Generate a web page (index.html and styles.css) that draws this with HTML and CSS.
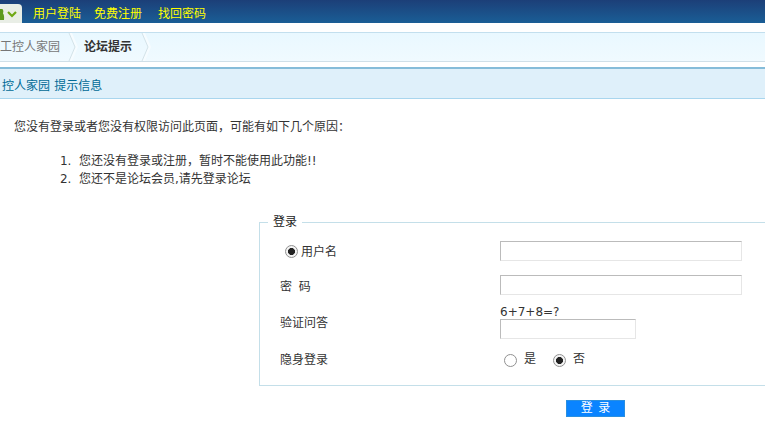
FILE: index.html
```html
<!DOCTYPE html>
<html lang="zh">
<head>
<meta charset="utf-8">
<title>论坛提示</title>
<link rel="stylesheet" href="styles.css">
</head>
<body>
<header class="topbar">
  <div class="tab">
    <svg width="22" height="19" viewBox="0 0 22 19"><path d="M0 5h2.500q1.500 1.500 .5 4.500 1.500 1.500 1 6.500H0z" fill="#5c9a1e"/><path d="M8 8l4 4 4-4" fill="none" stroke="#6fa814" stroke-width="2.200"/></svg>
  </div>
  <nav class="toplinks">
    <a>用户登陆</a>
    <a>免费注册</a>
    <a>找回密码</a>
  </nav>
</header>
<div class="crumbs">
  <span class="crumb">工控人家园</span>
  <svg class="sep" width="10" height="28" viewBox="0 0 10 28"><path d="M1 0l6 14-6 14h3l6-14-6-14z" fill="#f6fcff"/><path d="M1 0l6 14-6 14" fill="none" stroke="#d3e2e8"/></svg>
  <strong class="crumb-cur">论坛提示</strong>
  <svg class="sep" width="10" height="28" viewBox="0 0 10 28"><path d="M1 0l6 14-6 14h3l6-14-6-14z" fill="#f6fcff"/><path d="M1 0l6 14-6 14" fill="none" stroke="#d3e2e8"/></svg>
</div>
<div class="titlebar"><a>控人家园</a> <a>提示信息</a></div>
<p class="reason">您没有登录或者您没有权限访问此页面，可能有如下几个原因：</p>
<ol class="list">
  <li>您还没有登录或注册，暂时不能使用此功能!!</li>
  <li>您还不是论坛会员,请先登录论坛</li>
</ol>
<form class="login">
  <fieldset class="box">
    <legend class="legend">登录</legend>
    <div class="row row-user">
      <label class="label label-user"><input class="radio" type="radio" name="t" checked><span>用户名</span></label>
      <input class="field" type="text">
    </div>
    <div class="row row-pass">
      <label class="label">密&nbsp;&nbsp;码</label>
      <input class="field" type="password">
    </div>
    <div class="row row-code">
      <label class="label">验证问答</label>
      <div class="code">
        <div class="question">6+7+8=?</div>
        <input class="field field-short" type="text">
      </div>
    </div>
    <div class="row row-hide">
      <label class="label">隐身登录</label>
      <div class="choices">
        <label class="choice"><input class="radio" type="radio" name="h"><span>是</span></label>
        <label class="choice"><input class="radio" type="radio" name="h" checked><span>否</span></label>
      </div>
    </div>
  </fieldset>
  <button class="submit" type="button">登 录</button>
</form>
</body>
</html>
```
FILE: styles.css
```css
* { box-sizing: border-box; }
html, body { margin: 0; padding: 0; height: 427px; overflow: hidden; background: #fff; }
body { font: 12px/18px "Liberation Sans", "Noto Sans CJK SC", sans-serif; color: #333; }
.topbar { height: 23px; display: flex; align-items: flex-end; background: linear-gradient(#1c3f78, #1a5e96); }
.tab { width: 22px; height: 19px; background: #e9eee6; border-top-right-radius: 4px; display: flex; }
.toplinks { display: flex; gap: 14px; margin-left: 11px; height: 23px; align-items: center; padding-top: 5px; color: #ff0; }
.toplinks a { width: 48px; }
.toplinks a:first-child { margin-right: -1px; }
.toplinks a:last-child { margin-left: 2px; }
.crumbs { height: 30px; margin-top: 9px; border-top: 1px solid #c3dfee; border-bottom: 1px solid #cfdfe8; background: linear-gradient(#e9f8ff, #f0faff); display: flex; align-items: center; color: #777; }
.crumb { width: 68px; white-space: nowrap; }
.sep { flex: none; }
.crumb-cur { width: 63px; padding-left: 6px; color: #333; font-weight: 700; white-space: nowrap; }
.titlebar { height: 32px; margin-top: 5px; border-top: 2px solid #85bcd9; border-bottom: 1px solid #a9d6ee; background: #dff0fa; padding: 8px 0 0 2px; color: #006a96; word-spacing: 1px; }
.reason { margin: 19px 0 0 14px; height: 18px; }
.list { margin: 16px 0 0; padding: 0 0 0 79px; color: #333; font-family: "DejaVu Sans", "Noto Sans CJK SC", sans-serif; }
.list li { height: 18px; }
.list li::marker { content: counter(list-item) ".\00a0\00a0"; }
.login { margin: 25px 0 0 259px; }
.box { margin: 0 -30px 0 0; padding: 0; height: 173px; border: 1px solid #c4dfe9; min-width: 0; }
.legend { margin-left: 8px; padding: 0 5px; color: #222; line-height: 18px; }
.row { display: flex; height: 20px; }
.row-user { margin-top: 10px; }
.row-pass { margin-top: 14px; }
.row-code { margin-top: 14px; height: 34px; }
.row-hide { margin-top: 7px; }
.label { width: 240px; padding-left: 20px; line-height: 20px; }
.row-user .label { padding-top: 1px; }
.row-pass .label { padding-top: 2px; }
.row-code .label { padding-top: 4px; }
.label-user { display: flex; align-items: center; padding-left: 25px; }
.field { width: 242px; height: 20px; padding: 0; border: 1px solid; border-color: #bbb #e6e6e6 #e6e6e6 #bbb; background: #fff; display: block; }
.field-short { width: 136px; }
.code { display: flex; flex-direction: column; }
.question { height: 14px; line-height: 14px; margin-top: -4px; color: #333; font-family: "DejaVu Sans", sans-serif; font-size: 12px; }
.radio { appearance: none; width: 13px; height: 13px; margin: 0 3px 0 0; border: 1px solid #919191; border-radius: 50%; background: #fff; flex: none; }
.radio:checked { background: radial-gradient(circle, #222 0 3.200px, #f4f4f4 3.800px); }
.choices { display: flex; gap: 17px; padding-left: 4px; }
.choice { display: flex; align-items: center; }
.choice span { margin: -3px 0 0 4px; }
.submit { display: block; width: 59px; height: 17px; margin: 14px 0 0 307px; padding: 0; border: 1px solid #2a8fe0; background: #0a84ff; color: #fff; font: inherit; line-height: 15px; word-spacing: 2px; }
```
